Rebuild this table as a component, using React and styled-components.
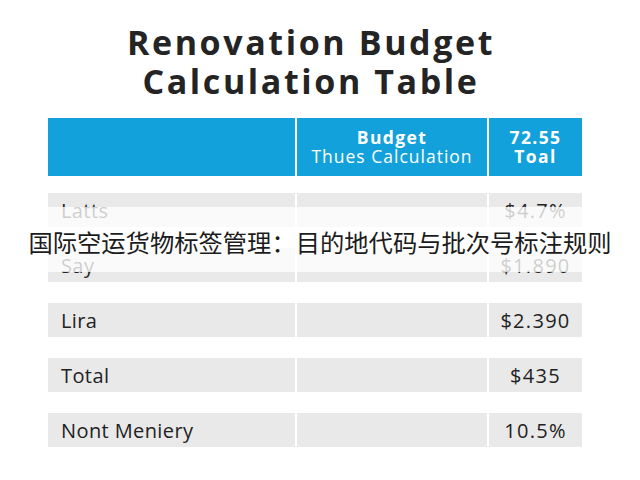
import React from 'react';
import styled, { createGlobalStyle } from 'styled-components';

const rows = [
  { label: 'Latts', value: '$4.7%' },
  { label: 'Say', value: '$1.890' },
  { label: 'Lira', value: '$2.390' },
  { label: 'Total', value: '$435' },
  { label: 'Nont Meniery', value: '10.5%' },
];

const App = () => {
  return (
    <>
      <GlobalStyle />
      <Page>
        <Title>
          Renovation Budget
          <br />
          Calculation Table
        </Title>

        <Table>
          <HeaderRow>
            <HeadCell />
            <HeadCell>
              <strong>Budget</strong>
              <span>Thues Calculation</span>
            </HeadCell>
            <HeadCell>
              <strong>72.55</strong>
              <strong>Toal</strong>
            </HeadCell>
          </HeaderRow>

          {rows.map(row => (
            <Row key={row.label}>
              <Cell>{row.label}</Cell>
              <Cell />
              <Cell value>{row.value}</Cell>
            </Row>
          ))}

          <Caption>国际空运货物标签管理：目的地代码与批次号标注规则</Caption>
        </Table>
      </Page>
    </>
  );
};

const GlobalStyle = createGlobalStyle`
  html, body {
    margin: 0;
    padding: 0;
    background: #ffffff;
  }

  body {
    font-family: 'Open Sans', 'Liberation Sans', sans-serif;
  }
`;

const Page = styled.div`
  width: 640px;
  height: 480px;
  overflow: hidden;
  padding-top: 23px;
  box-sizing: border-box;
`;

const Title = styled.h1`
  margin: 0 0 17px;
  padding-right: 18px;
  text-align: center;
  font-size: 34px;
  line-height: 39px;
  font-weight: 700;
  color: #242424;
  letter-spacing: 2.6px;
`;

const Table = styled.div`
  position: relative;
  width: 534px;
  margin-left: 48px;
  display: flex;
  flex-direction: column;
  gap: 21px;
`;

const HeaderRow = styled.div`
  display: grid;
  grid-template-columns: 247px 190px 93px;
  gap: 2px;
  height: 58px;
  margin-bottom: -4px;
`;

const HeadCell = styled.div`
  background: #13a1dc;
  color: #ffffff;
  display: flex;
  flex-direction: column;
  align-items: center;
  justify-content: center;
  font-size: 17.5px;
  line-height: 19px;
  letter-spacing: 1px;

  strong {
    font-weight: 700;
    letter-spacing: 1.4px;
  }
`;

const Row = styled.div`
  display: grid;
  grid-template-columns: 247px 190px 93px;
  gap: 2px;
  height: 34px;
`;

const Cell = styled.div`
  background: #e9e9e9;
  color: #222222;
  font-size: 20px;
  display: flex;
  align-items: center;
  justify-content: ${p => (p.value ? 'center' : 'flex-start')};
  padding-left: ${p => (p.value ? '0' : '13px')};
  letter-spacing: ${p => (p.value ? '1.3px' : '0.4px')};
`;

const Caption = styled.div`
  position: absolute;
  top: 89px;
  left: -48px;
  width: 640px;
  height: 65px;
  background: rgba(255, 255, 255, 0.78);
  display: flex;
  align-items: center;
  justify-content: center;
  font-family: 'Noto Sans CJK SC', 'Noto Sans', sans-serif;
  font-size: 24.3px;
  color: #1c1c1c;
  white-space: nowrap;
  padding-top: 3px;
  box-sizing: border-box;
`;

export default App;
